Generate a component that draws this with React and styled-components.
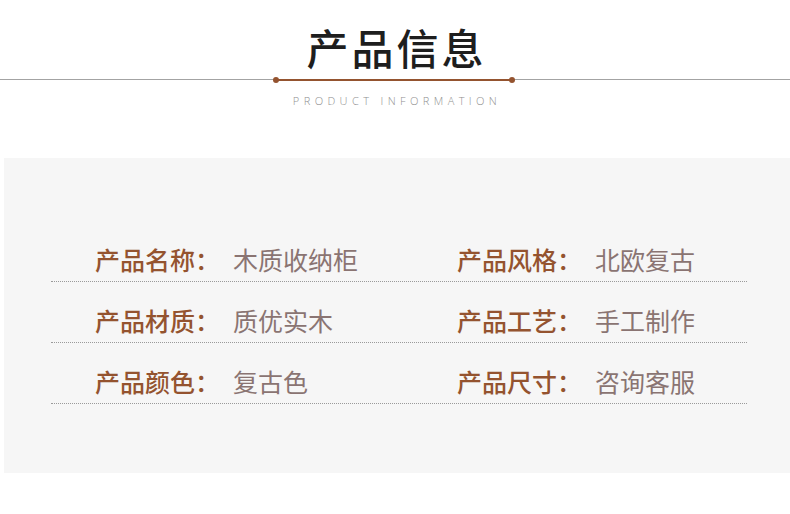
import styled, { createGlobalStyle } from "styled-components";

const GlobalStyle = createGlobalStyle`
    body {
        margin: 0;
        background: #ffffff;
        font-family: "Noto Sans CJK SC", "Noto Sans", sans-serif;
    }
`

const brown = "#94532f";

const Page = styled.div`
    width: 790px;
    height: 514px;
    overflow: hidden;
`

const Header = styled.div`
    display: flex;
    flex-direction: column;
    align-items: center;
    padding-top: 19px;
`

const Title = styled.h1`
    margin: 0;
    font-size: 42px;
    line-height: 56px;
    font-weight: 500;
    letter-spacing: 3px;
    color: #1e1e1e;
    padding-left: 3px;
`

const Divider = styled.div`
    align-self: stretch;
    height: 1px;
    margin-top: 4px;
    background: #a3a3a3;
    display: flex;
    justify-content: center;
    align-items: center;
`

const Accent = styled.div`
    position: relative;
    width: 236px;
    height: 2px;
    margin-left: -2px;
    background: ${brown};

    &::before, &::after {
        content: "";
        position: absolute;
        top: -2px;
        width: 6px;
        height: 6px;
        border-radius: 50%;
        background: ${brown};
    }
    &::before { left: -3px; }
    &::after { right: -3px; }
`

const Subtitle = styled.div`
    margin-top: 14px;
    font-family: "Open Sans", "Liberation Sans", sans-serif;
    font-size: 11px;
    font-weight: 300;
    letter-spacing: 4.4px;
    color: #8f8f8f;
    line-height: 14px;
    padding-left: 4px;
`

const Panel = styled.div`
    margin: 50px 0 0 4px;
    height: 315px;
    box-sizing: border-box;
    background: #f6f6f6;
    padding: 63px 0 0 47px;
`

const Table = styled.div`
    width: 696px;
`

const Row = styled.div`
    display: flex;
    height: 61px;
    box-sizing: border-box;
    align-items: flex-end;
    padding-bottom: 6px;
    border-bottom: 1px dotted #9a9a9a;
`

const Cell = styled.div`
    display: flex;
    width: ${p => p.$width}px;
    padding-left: ${p => p.$pad}px;
    box-sizing: border-box;
    font-size: 25px;
    line-height: 32px;
`

const Label = styled.span`
    width: 138px;
    color: ${brown};
    font-weight: 500;
`

const Value = styled.span`
    color: #8a7472;
    font-weight: 400;
`

const rows = [
    [["产品名称：", "木质收纳柜"], ["产品风格：", "北欧复古"]],
    [["产品材质：", "质优实木"], ["产品工艺：", "手工制作"]],
    [["产品颜色：", "复古色"], ["产品尺寸：", "咨询客服"]],
];

const App = () =>
    <Page>
        <GlobalStyle/>
        <Header>
            <Title>产品信息</Title>
            <Divider><Accent/></Divider>
            <Subtitle>PRODUCT INFORMATION</Subtitle>
        </Header>
        <Panel>
            <Table>
                {rows.map((r, i) =>
                    <Row key={i}>
                        <Cell $width={406} $pad={44}>
                            <Label>{r[0][0]}</Label>
                            <Value>{r[0][1]}</Value>
                        </Cell>
                        <Cell $width={290} $pad={0}>
                            <Label>{r[1][0]}</Label>
                            <Value>{r[1][1]}</Value>
                        </Cell>
                    </Row>
                )}
            </Table>
        </Panel>
    </Page>

export default App;
